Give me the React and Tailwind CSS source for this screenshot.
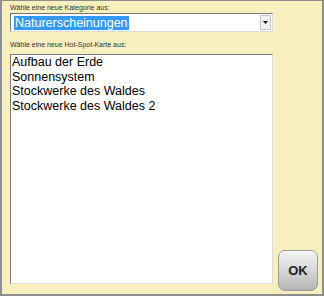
export default function App() {
  const maps = [
    'Aufbau der Erde',
    'Sonnensystem',
    'Stockwerke des Waldes',
    'Stockwerke des Waldes 2',
  ];

  return (
    <div
      className="w-[324px] h-[296px] bg-[#f8efbf] border-t border-l-2 border-r-2 border-b-2 border-[#8e8e8e] flex"
      style={{ fontFamily: '"Liberation Sans", Arial, sans-serif' }}
    >
      {/* left column: category select + map list */}
      <div className="w-[263px] ml-[8px] pt-[2px] pb-[10px] flex flex-col">
        <div className="h-[10px] leading-[10px] text-[7px] text-[#333]">
          Wähle eine neue Kategorie aus:
        </div>
        <div className="h-[19px] bg-white border border-t-[#7a7a7a] border-l-[#7a7a7a] border-b-[#dcdcdc] border-r-[#dcdcdc] flex items-center pl-[3px] pr-px">
          <span className="bg-[#3399ff] text-white text-[12.5px] leading-[14px] px-px">
            Naturerscheinungen
          </span>
          <div className="ml-auto w-[11px] h-[15px] bg-[#f0f0f0] border border-[#c8c8c8] flex items-center justify-center">
            <svg width="5" height="3" viewBox="0 0 5 3">
              <path d="M0 0h5L2.5 3z" fill="#111" />
            </svg>
          </div>
        </div>
        <div className="mt-[8px] h-[10px] leading-[10px] text-[7px] text-[#333]">
          Wähle eine neue Hot-Spot-Karte aus:
        </div>
        <div className="mt-[4px] flex-1 bg-white border border-t-[#7a7a7a] border-l-[#7a7a7a] border-b-[#dcdcdc] border-r-[#dcdcdc] pl-px">
          {maps.map((m) => (
            <div key={m} className="text-[12.5px] leading-[14.5px] text-black">
              {m}
            </div>
          ))}
        </div>
      </div>

      {/* right column: OK button */}
      <div className="flex flex-col justify-end pl-[5px] pr-[4px] pb-[3px]">
        <button className="w-[40px] h-[41px] rounded-[7px] border border-[#9a9a9a] bg-gradient-to-b from-[#f4f4f4] via-[#d8d8d8] to-[#b4b4b4] shadow-[inset_0_1px_0_#fff] flex items-center justify-center text-[13px] font-bold text-[#222]">
          OK
        </button>
      </div>
    </div>
  );
}
